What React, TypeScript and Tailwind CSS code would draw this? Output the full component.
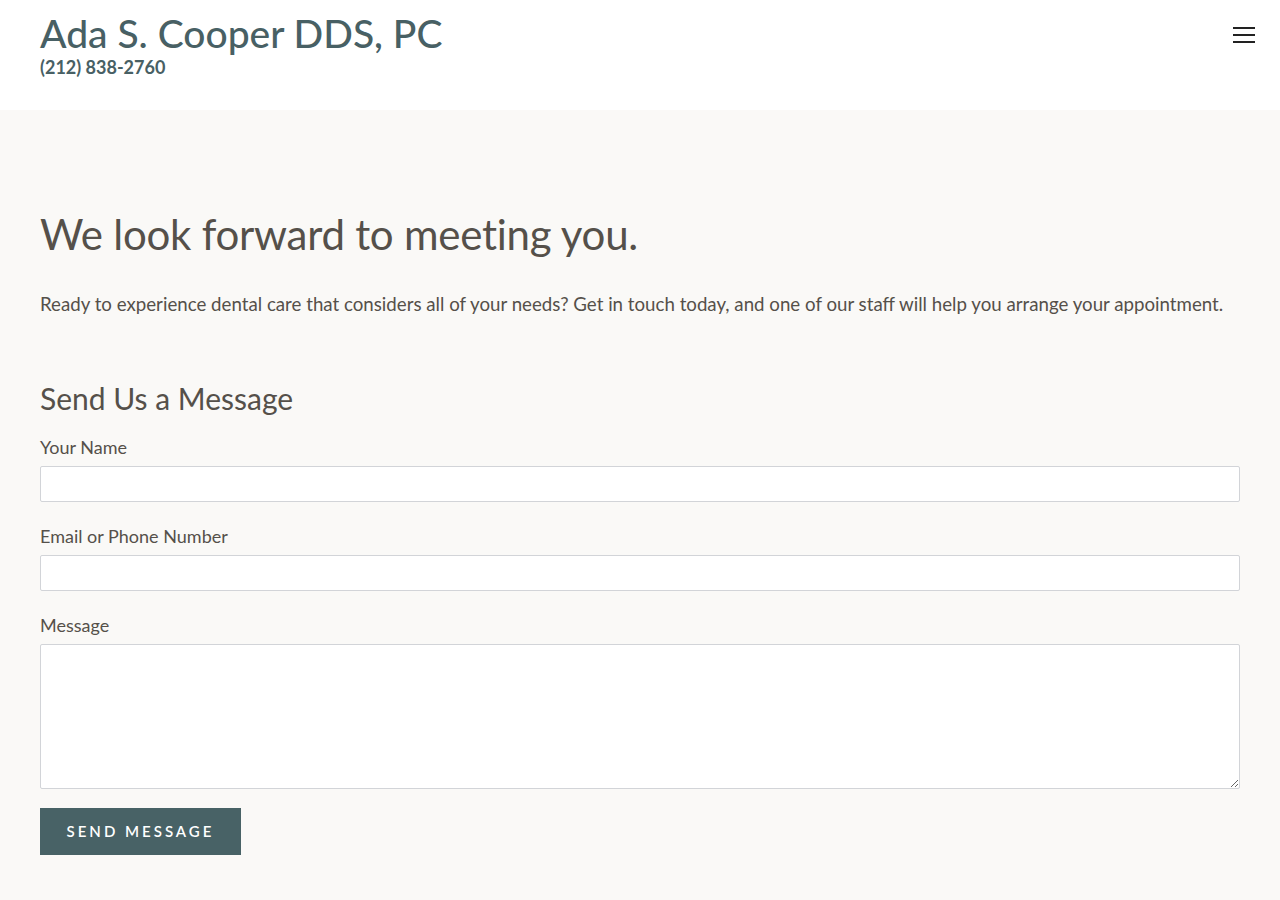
import React from 'react';

const font = { fontFamily: 'Lato, "Open Sans", sans-serif' };

const Field: React.FC<{ label: string; id: string; multiline?: boolean }> = ({ label, id, multiline }) => (
  <div className="flex flex-col">
    <label htmlFor={id} className="text-[18px] leading-[22px] text-[#55504a] mb-[8px]">
      {label}
    </label>
    {multiline ? (
      <textarea
        id={id}
        className="w-full h-[145px] bg-white border border-[#d2d4d8] rounded-[2px] outline-none px-3 py-2"
      />
    ) : (
      <input
        id={id}
        type="text"
        className="w-full h-[36px] bg-white border border-[#d2d4d8] rounded-[2px] outline-none px-3"
      />
    )}
  </div>
);

const App: React.FC = () => {
  return (
    <div style={font} className="min-h-[900px] bg-[#faf9f7]">
      <header className="bg-white h-[110px] px-[40px] pt-[11px] flex justify-between">
        <div>
          <h1 className="text-[39px] leading-[44px] text-[#486064] font-medium">
            Ada S. Cooper DDS, PC
          </h1>
          <p className="mt-[2px] text-[18px] leading-[20px] text-[#486064] font-bold">(212) 838-2760</p>
        </div>
        <button aria-label="Menu" className="mt-[16px] mr-[-13px] w-[20px] h-[16px] flex flex-col justify-between">
          <span className="block h-[2px] w-[22px] bg-[#222]" />
          <span className="block h-[2px] w-[22px] bg-[#222]" />
          <span className="block h-[2px] w-[22px] bg-[#222]" />
        </button>
      </header>

      <main className="px-[40px] pt-[98px] pb-[44px]">
        <h2 className="text-[42px] leading-[52px] text-[#55504a] tracking-[-0.25px]">We look forward to meeting you.</h2>
        <p className="mt-[30px] text-[18.7px] leading-[28px] text-[#55504a]">
          Ready to experience dental care that considers all of your needs? Get in touch today, and one of our staff will help you arrange your appointment.
        </p>

        <h3 className="mt-[62px] text-[30px] leading-[36px] text-[#55504a]">Send Us a Message</h3>
        <form className="mt-[20px] flex flex-col gap-[23px]" onSubmit={e => e.preventDefault()}>
          <Field label="Your Name" id="name" />
          <Field label="Email or Phone Number" id="contact" />
          <div className="flex flex-col">
            <Field label="Message" id="message" multiline />
            <div>
              <button
                type="submit"
                className="mt-[19px] h-[47px] w-[201px] bg-[#486266] text-white text-[15px] tracking-[3px] font-semibold"
              >
                SEND MESSAGE
              </button>
            </div>
          </div>
        </form>
      </main>
    </div>
  );
};

export default App;
